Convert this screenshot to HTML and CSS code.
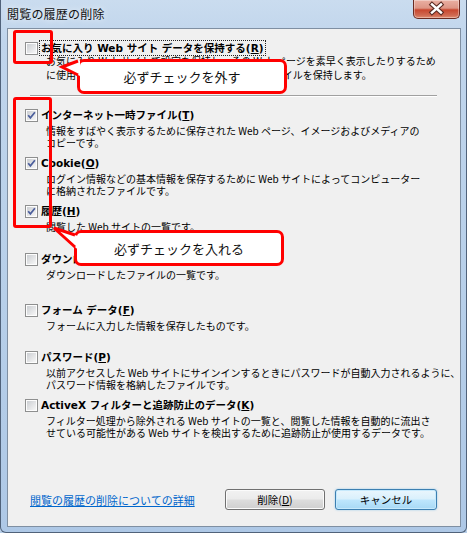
FILE: index.html
```html
<!DOCTYPE html>
<html lang="ja">
<head>
<meta charset="utf-8">
<title>閲覧の履歴の削除</title>
<link rel="stylesheet" href="styles.css">
</head>
<body>
<div class="window">
  <div class="titlebar">
    <span class="title">閲覧の履歴の削除</span>
    <div class="close">
      <svg width="47" height="19" viewBox="0 0 47 19">
        <path d="M19 5.5 L28 13.5 M28 5.5 L19 13.5" stroke="#5a2a22" stroke-width="4.6" stroke-linecap="square"/>
        <path d="M19 5.5 L28 13.5 M28 5.5 L19 13.5" stroke="#ffffff" stroke-width="2.4" stroke-linecap="square"/>
      </svg>
    </div>
  </div>

  <div class="panel">
    <div class="item item-first">
      <div class="label-row">
        <span class="cb cb-first"></span>
        <span class="label focus">お気に入り Web サイト データを保持する(<u>R</u>)</span>
      </div>
      <div class="desc">お気に入り Web サイトで設定を保持し、その Web ページを素早く表示したりするため<br>に使用される Cookie およびインターネット一時ファイルを保持します。</div>
    </div>

    <div class="sep"></div>

    <div class="items">
      <div class="item">
        <div class="label-row">
          <span class="cb"><svg viewBox="0 0 9 9" width="9" height="9"><path d="M1.2 4.2 L3.4 6.9 L7.9 1.3" fill="none" stroke="#4b5e9c" stroke-width="1.7"/></svg></span>
          <span class="label">インターネット一時ファイル(<u>T</u>)</span>
        </div>
        <div class="desc">情報をすばやく表示するために保存された Web ページ、イメージおよびメディアの<br>コピーです。</div>
      </div>
      <div class="item">
        <div class="label-row">
          <span class="cb"><svg viewBox="0 0 9 9" width="9" height="9"><path d="M1.2 4.2 L3.4 6.9 L7.9 1.3" fill="none" stroke="#4b5e9c" stroke-width="1.7"/></svg></span>
          <span class="label">Cookie(<u>O</u>)</span>
        </div>
        <div class="desc">ログイン情報などの基本情報を保存するために Web サイトによってコンピューター<br>に格納されたファイルです。</div>
      </div>
      <div class="item">
        <div class="label-row">
          <span class="cb"><svg viewBox="0 0 9 9" width="9" height="9"><path d="M1.2 4.2 L3.4 6.9 L7.9 1.3" fill="none" stroke="#4b5e9c" stroke-width="1.7"/></svg></span>
          <span class="label">履歴(<u>H</u>)</span>
        </div>
        <div class="desc">閲覧した Web サイトの一覧です。</div>
      </div>
      <div class="item">
        <div class="label-row">
          <span class="cb"></span>
          <span class="label">ダウンロードの履歴(<u>W</u>)</span>
        </div>
        <div class="desc">ダウンロードしたファイルの一覧です。</div>
      </div>
      <div class="item">
        <div class="label-row">
          <span class="cb"></span>
          <span class="label">フォーム データ(<u>F</u>)</span>
        </div>
        <div class="desc">フォームに入力した情報を保存したものです。</div>
      </div>
      <div class="item">
        <div class="label-row">
          <span class="cb"></span>
          <span class="label">パスワード(<u>P</u>)</span>
        </div>
        <div class="desc">以前アクセスした Web サイトにサインインするときにパスワードが自動入力されるように、<br>パスワード情報を格納したファイルです。</div>
      </div>
      <div class="item">
        <div class="label-row">
          <span class="cb"></span>
          <span class="label">ActiveX フィルターと追跡防止のデータ(<u>K</u>)</span>
        </div>
        <div class="desc">フィルター処理から除外される Web サイトの一覧と、閲覧した情報を自動的に流出さ<br>せている可能性がある Web サイトを検出するために追跡防止が使用するデータです。</div>
      </div>
    </div>

    <div class="footer">
      <a class="link" href="#">閲覧の履歴の削除についての詳細</a>
      <div class="buttons">
        <button class="btn">削除(<u>D</u>)</button>
        <button class="btn btn-default">キャンセル</button>
      </div>
    </div>
  </div>

  <div class="mark mark1"></div>
  <div class="mark mark2"></div>
  <div class="callout callout1">必ずチェックを外す</div>
  <div class="callout callout2">必ずチェックを入れる</div>
  <svg class="tails" width="467" height="533" viewBox="0 0 467 533">
    <polygon points="62,67 80,60.2 80,76" fill="#ffffff"/>
    <polyline points="78,61 62,67 78,75" fill="none" stroke="#ff0000" stroke-width="3"/>
    <polygon points="54,228 80,236.7 80,251.5" fill="#ffffff"/>
    <polyline points="75,235 54,228 75,247" fill="none" stroke="#ff0000" stroke-width="3"/>
  </svg>
</div>
</body>
</html>
```

FILE: styles.css
```css
html, body {
  margin: 0;
  padding: 0;
}
body {
  font-family: "Noto Sans CJK JP", "Noto Sans", sans-serif;
  color: #000;
  background: #b9cfe8;
}
.window {
  position: relative;
  width: 467px;
  height: 533px;
  box-sizing: border-box;
  border: 1px solid #50627a;
  border-top: 0;
  border-radius: 0 0 6px 6px;
  background: linear-gradient(to bottom, #cadcef 0, #c0d5ec 40px, #b7cfe9 300px, #aec8e6 100%);
  display: flex;
  flex-direction: column;
  overflow: hidden;
}
.titlebar {
  height: 28px;
  flex: none;
  display: flex;
  justify-content: space-between;
  align-items: flex-start;
  padding: 0 6px 0 6px;
}
.title {
  font-size: 12px;
  line-height: 28px;
  color: #111;
  letter-spacing: 0.2px;
  text-shadow: 0 0 6px rgba(255,255,255,0.9);
}
.close {
  width: 47px;
  height: 19px;
  box-sizing: border-box;
  border: 1px solid #6a2b22;
  border-top: 0;
  border-radius: 0 0 5px 5px;
  background: linear-gradient(to bottom, #eab0a3 0%, #dd9585 45%, #c8472f 55%, #d06a52 85%, #e08c70 100%);
  box-shadow: inset 0 0 0 1px rgba(255,255,255,0.35);
}
.close svg {
  display: block;
  margin: -1px 0 0 -1px;
}
.panel {
  flex: 1;
  margin: 0 5px 5px 6px;
  border: 1px solid #7f8fa2;
  background: #f0f0f0;
  display: flex;
  flex-direction: column;
  padding: 10px 23px 16px 17px;
}
.label-row {
  height: 18px;
  display: flex;
  align-items: center;
}
.cb {
  flex: none;
  width: 13px;
  height: 13px;
  box-sizing: border-box;
  border: 1px solid #8e8f8f;
  padding: 1px;
  background: linear-gradient(135deg, #cbced2, #f7f7f7) content-box, #fdfdfd;
  margin-right: 3px;
  display: flex;
}
.cb svg {
  display: block;
}
.cb-first {
  margin-right: 1px;
}
.label {
  font-family: "DejaVu Sans", "Noto Sans CJK JP", sans-serif;
  font-size: 10.5px;
  font-weight: bold;
  line-height: 14px;
  white-space: nowrap;
}
.focus {
  border: 1px dotted #222;
  padding: 0 1px;
}
.desc {
  padding-left: 21px;
  font-size: 10px;
  line-height: 12px;
  margin-top: 1px;
  white-space: nowrap;
}
.item {
  height: 48px;
}
.item-first {
  height: auto;
}
.item-first .desc {
  margin-top: -3px;
  line-height: 14px;
}
.sep {
  margin: 13px 0 9px 5px;
  border-top: 1px solid #a0a0a0;
  border-bottom: 1px solid #ffffff;
}
.items .item:nth-child(4) {
  height: 51px;
}
.items .item:nth-child(5) {
  height: 47px;
}
.footer {
  margin-top: auto;
  display: flex;
  align-items: center;
  height: 21px;
  padding-left: 5px;
}
.link {
  font-size: 11px;
  color: #0066cc;
  text-decoration: underline;
  white-space: nowrap;
}
.buttons {
  margin-left: auto;
  display: flex;
  gap: 10px;
}
.btn {
  width: 100px;
  height: 21px;
  box-sizing: border-box;
  padding: 0;
  border: 1px solid #707070;
  border-radius: 3px;
  font-family: "Noto Sans CJK JP", "Noto Sans", sans-serif;
  font-size: 10.5px;
  line-height: 18px;
  color: #000;
  background: linear-gradient(to bottom, #f2f2f2 0%, #ebebeb 48%, #dddddd 52%, #cfcfcf 100%);
  box-shadow: inset 0 0 0 1px #fbfbfb;
}
.btn-default {
  width: 102px;
  border-color: #3c7fb1;
  background: linear-gradient(to bottom, #eaf6fd 0%, #d9f0fc 48%, #bee6fd 52%, #a7d9f5 100%);
  box-shadow: inset 0 0 0 1px #c6e9fc, 0 0 2px rgba(80,170,230,0.6);
}
.mark {
  position: absolute;
  box-sizing: border-box;
  border: 3px solid #ff0000;
  border-radius: 3px;
}
.mark1 {
  left: 12px;
  top: 30px;
  width: 40px;
  height: 34px;
}
.mark2 {
  left: 12px;
  top: 97px;
  width: 39px;
  height: 131px;
}
.callout {
  position: absolute;
  box-sizing: border-box;
  background: #ffffff;
  border: 3px solid #ff0000;
  border-radius: 7px;
  display: flex;
  align-items: center;
  justify-content: center;
  font-size: 13px;
  color: #111;
  white-space: nowrap;
}
.callout1 {
  left: 76px;
  top: 59px;
  width: 210px;
  height: 35px;
}
.callout2 {
  left: 73px;
  top: 230px;
  width: 210px;
  height: 36px;
}
.tails {
  position: absolute;
  left: -1px;
  top: 0;
  pointer-events: none;
}
```
